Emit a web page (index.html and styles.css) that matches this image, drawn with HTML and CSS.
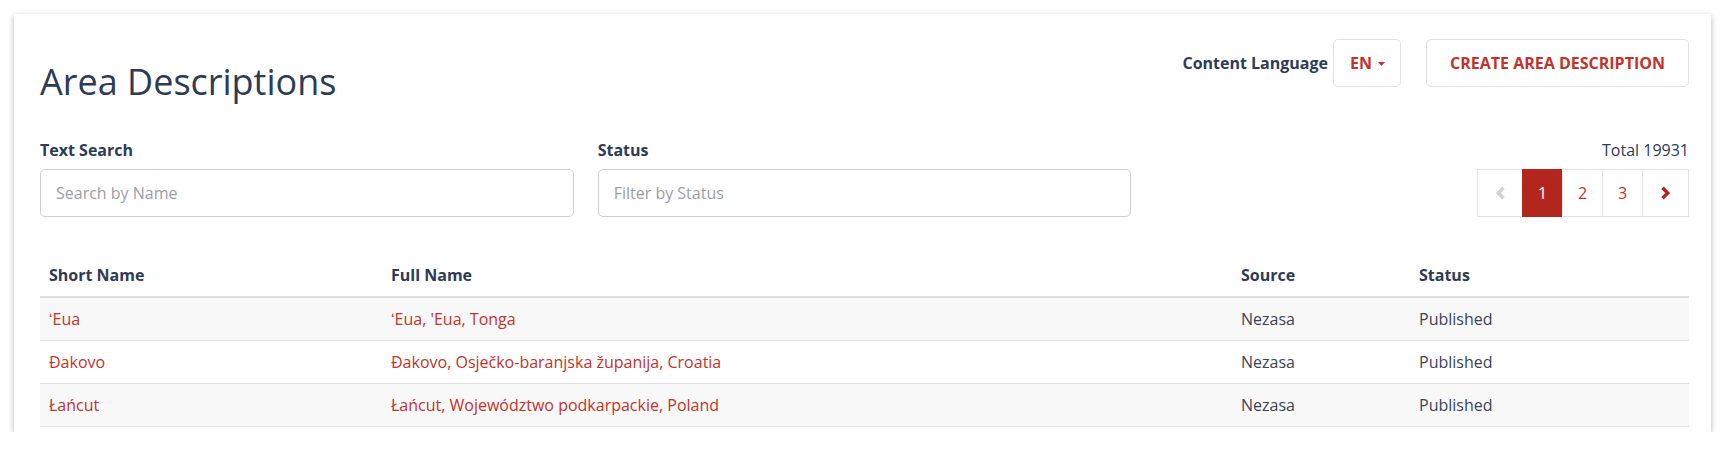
FILE: index.html
```html
<!DOCTYPE html>
<html lang="en">
<head>
<meta charset="utf-8">
<title>Area Descriptions</title>
<link rel="stylesheet" href="styles.css">
</head>
<body>
<div class="card">
  <div class="header">
    <h1 class="title">Area Descriptions</h1>
    <div class="controls">
      <span class="lang-label">Content Language</span>
      <button class="btn lang-btn">EN<svg class="caret" width="7" height="4" viewBox="0 0 7 4"><path d="M0 0H7L3.5 4Z" fill="currentColor"/></svg></button>
      <button class="btn create-btn">CREATE AREA DESCRIPTION</button>
    </div>
  </div>

  <div class="filters">
    <div class="field">
      <label class="field-label">Text Search</label>
      <input class="field-input" type="text" placeholder="Search by Name">
    </div>
    <div class="field">
      <label class="field-label">Status</label>
      <input class="field-input" type="text" placeholder="Filter by Status">
    </div>
    <div class="field field-right">
      <div class="total">Total 19931</div>
      <div class="pager">
        <span class="page page-nav disabled"><svg width="11" height="14" viewBox="0 0 11 14"><path d="M8.5 1.8L3.3 7L8.5 12.2" fill="none" stroke="currentColor" stroke-width="3.4"/></svg></span>
        <span class="page active">1</span>
        <span class="page">2</span>
        <span class="page">3</span>
        <span class="page page-nav"><svg width="11" height="14" viewBox="0 0 11 14"><path d="M2.5 1.8L7.7 7L2.5 12.2" fill="none" stroke="currentColor" stroke-width="3.4"/></svg></span>
      </div>
    </div>
  </div>

  <table class="grid">
    <colgroup>
      <col class="c-short">
      <col class="c-full">
      <col class="c-source">
      <col class="c-status">
    </colgroup>
    <thead>
      <tr><th>Short Name</th><th>Full Name</th><th>Source</th><th>Status</th></tr>
    </thead>
    <tbody>
      <tr><td><a class="link">ʻEua</a></td><td><a class="link">ʻEua, 'Eua, Tonga</a></td><td>Nezasa</td><td>Published</td></tr>
      <tr><td><a class="link">Đakovo</a></td><td><a class="link">Đakovo, Osječko-baranjska županija, Croatia</a></td><td>Nezasa</td><td>Published</td></tr>
      <tr><td><a class="link">Łańcut</a></td><td><a class="link">Łańcut, Województwo podkarpackie, Poland</a></td><td>Nezasa</td><td>Published</td></tr>
    </tbody>
  </table>
</div>
</body>
</html>
```

FILE: styles.css
```css
* { box-sizing: border-box; }

body {
  margin: 0;
  background: #ffffff;
  font-family: "Open Sans", "Liberation Sans", sans-serif;
  font-size: 16px;
  color: #2d3b55;
}

.card {
  margin: 14px 0 0 14px;
  width: 1697px;
  padding: 25px 22px 5px 26px;
  background: #fff;
  box-shadow: 0 2px 6px rgba(0, 0, 0, 0.28);
}

.header {
  display: flex;
  justify-content: space-between;
  align-items: flex-start;
}

.title {
  margin: 23px 0 0 0;
  font-size: 36px;
  line-height: 40px;
  font-weight: 400;
  color: #2d3b55;
}

.controls {
  display: flex;
  align-items: center;
}

.lang-label {
  font-weight: 700;
  line-height: 22px;
}

.btn {
  height: 48px;
  background: #fff;
  border: 1px solid #e2e2e2;
  border-radius: 5px;
  font-family: inherit;
  font-size: 16px;
  font-weight: 700;
  color: #c1332b;
  display: flex;
  align-items: center;
}

.lang-btn {
  margin-left: 5px;
  width: 68px;
  padding: 0 0 0 16px;
}

.caret {
  margin-left: 6px;
  margin-top: 2px;
}

.create-btn {
  margin-left: 25px;
  width: 263px;
  justify-content: center;
  padding: 0;
}

.filters {
  margin-top: 37px;
  display: grid;
  grid-template-columns: 1fr 1fr 1fr;
  column-gap: 24px;
}

.field {
  display: flex;
  flex-direction: column;
}

.field-right {
  align-items: flex-end;
}

.field-label {
  font-weight: 700;
  line-height: 22px;
  margin-bottom: 8px;
}

.field-input {
  height: 48px;
  border: 1px solid #cfcfcf;
  border-radius: 5px;
  padding: 0 15px;
  font-family: inherit;
  font-size: 16px;
  color: #2d3b55;
}

.field-input::placeholder {
  color: #9a9ea6;
}

.total {
  line-height: 22px;
  margin-bottom: 8px;
}

.pager {
  display: flex;
  height: 48px;
}

.page {
  width: 41px;
  height: 48px;
  border: 1px solid #e3e3e3;
  margin-left: -1px;
  display: flex;
  align-items: center;
  justify-content: center;
  color: #c1332b;
  background: #fff;
}

.page-nav {
  width: 47px;
  color: #b3261e;
}

.page-nav:first-child {
  margin-left: 0;
  width: 46px;
}

.page.disabled {
  color: #d2d2d2;
}

.page.active {
  background: #b3261e;
  border-color: #b3261e;
  color: #fff;
}

.grid {
  margin-top: 37px;
  width: 100%;
  border-collapse: collapse;
  table-layout: fixed;
}

.c-short { width: 342px; }
.c-full { width: 850px; }
.c-source { width: 178px; }
.c-status { width: 279px; }

.grid th,
.grid td {
  text-align: left;
  padding: 10px 9px;
  line-height: 22px;
  font-size: 16px;
}

.grid th {
  font-weight: 700;
  border-bottom: 2px solid #e0e0e0;
}

.grid td {
  border-bottom: 1px solid #e0e0e0;
  color: #3a4457;
}

.grid tbody tr:nth-child(odd) {
  background: #f8f8f8;
}

.link {
  color: #c1332b;
  text-decoration: none;
}
```
